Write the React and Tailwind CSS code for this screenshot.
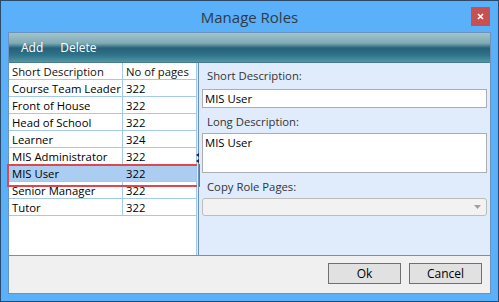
const roles = [
  { name: 'Course Team Leader', pages: 322 },
  { name: 'Front of House', pages: 322 },
  { name: 'Head of School', pages: 322 },
  { name: 'Learner', pages: 324 },
  { name: 'MIS Administrator', pages: 322 },
  { name: 'MIS User', pages: 322, selected: true },
  { name: 'Senior Manager', pages: 322 },
  { name: 'Tutor', pages: 322 },
];

export default function App() {
  return (
    <div className="w-[499px] h-[302px] bg-[#5ab0f9] border border-[#2b4a6b] flex flex-col font-['Open_Sans',sans-serif] text-[11.3px] overflow-hidden">
      {/* Title bar */}
      <div className="relative h-[31px] flex items-center justify-center shrink-0">
        <span className="text-[15px] text-[#2f3b48] mt-[1px]">Manage Roles</span>
        <div className="absolute right-[8px] top-[6px] w-[19px] h-[19px] bg-[#c75050] flex items-center justify-center">
          <svg width="7" height="7" viewBox="0 0 7 7">
            <path d="M1 1L6 6M6 1L1 6" stroke="#fff" strokeWidth="1.6" />
          </svg>
        </div>
      </div>

      {/* Window content */}
      <div className="mx-[7px] h-[262px] border border-[#6a93bd] flex flex-col bg-[#f0f0f0]">
        {/* Toolbar */}
        <div className="h-[30px] shrink-0 flex items-center gap-[17px] px-[12px] text-white text-[12px] border-b border-[#4b7a8c] bg-[linear-gradient(to_bottom,#a3c4ca_0%,#7fabb5_35%,#26627a_52%,#2e7188_75%,#4c98a4_100%)]">
          <span>Add</span>
          <span>Delete</span>
        </div>

        {/* Body */}
        <div className="flex h-[193px] shrink-0 border-b border-[#6a93bd]">
          {/* Roles list */}
          <div className="w-[188px] bg-white border-r border-[#a4c9ef] relative">
            <div className="flex h-[17px] border-b border-[#a4c9ef] leading-[18px]">
              <div className="w-[114px] pl-[3px] border-r border-[#a4c9ef] whitespace-nowrap overflow-hidden text-[#111]">Short Description</div>
              <div className="flex-1 pl-[3px] whitespace-nowrap overflow-hidden text-[#111]">No of pages</div>
            </div>
            {roles.map((r) => (
              <div
                key={r.name}
                className={`flex h-[17px] border-b border-[#a4c9ef] leading-[18px] ${r.selected ? 'bg-[#aacdf1]' : ''}`}
              >
                <div className={`w-[114px] pl-[3px] whitespace-nowrap text-black ${r.selected ? '' : 'border-r border-[#a4c9ef]'}`}>{r.name}</div>
                <div className="flex-1 pl-[3px] text-black">{r.pages}</div>
              </div>
            ))}
            <div className="absolute left-[-2px] right-[-4px] top-[101px] h-[23px] border-2 border-[#e0474c]" />
          </div>

          {/* Splitter */}
          <div className="w-[2px] bg-[#dfeafb] border-r border-[#6a93bd] relative">
            <svg className="absolute left-[-1px] top-[90px]" width="4" height="10" viewBox="0 0 4 10">
              <path d="M3 0L0 2L3 4Z M3 6L0 8L3 10Z" fill="#222" />
            </svg>
          </div>

          {/* Details */}
          <div className="flex-1 bg-[#e0ecfc] px-[3px] pt-[2px] text-[#333]">
            <div className="pl-[5px] h-[24px] leading-[22px]">Short Description:</div>
            <div className="h-[19px] bg-white border border-[#abadb3] pl-[2px] leading-[17px] text-black">MIS User</div>
            <div className="pl-[5px] mt-[1px] h-[24px] leading-[26px]">Long Description:</div>
            <div className="h-[40px] bg-white border border-[#abadb3] pl-[2px] leading-[17px] text-black">MIS User</div>
            <div className="pl-[5px] mt-[2px] h-[23px] leading-[24px]">Copy Role Pages:</div>
            <div className="h-[18px] bg-[#f2f2f2] border border-[#bcbcbc] rounded-[3px] flex items-center justify-end pr-[5px]">
              <svg width="7" height="4" viewBox="0 0 7 4">
                <path d="M0 0H7L3.5 4Z" fill="#a0a0a0" />
              </svg>
            </div>
          </div>
        </div>

        {/* Footer */}
        <div className="flex-1 flex items-center justify-end gap-[8px] pr-[8px] pb-[2px]">
          <button className="w-[73px] h-[21px] bg-[#e1e1e1] border border-[#707070] text-black text-[12px] leading-[18px]">Ok</button>
          <button className="w-[73px] h-[21px] bg-[#e1e1e1] border border-[#707070] text-black text-[12px] leading-[18px]">Cancel</button>
        </div>
      </div>
    </div>
  );
}
